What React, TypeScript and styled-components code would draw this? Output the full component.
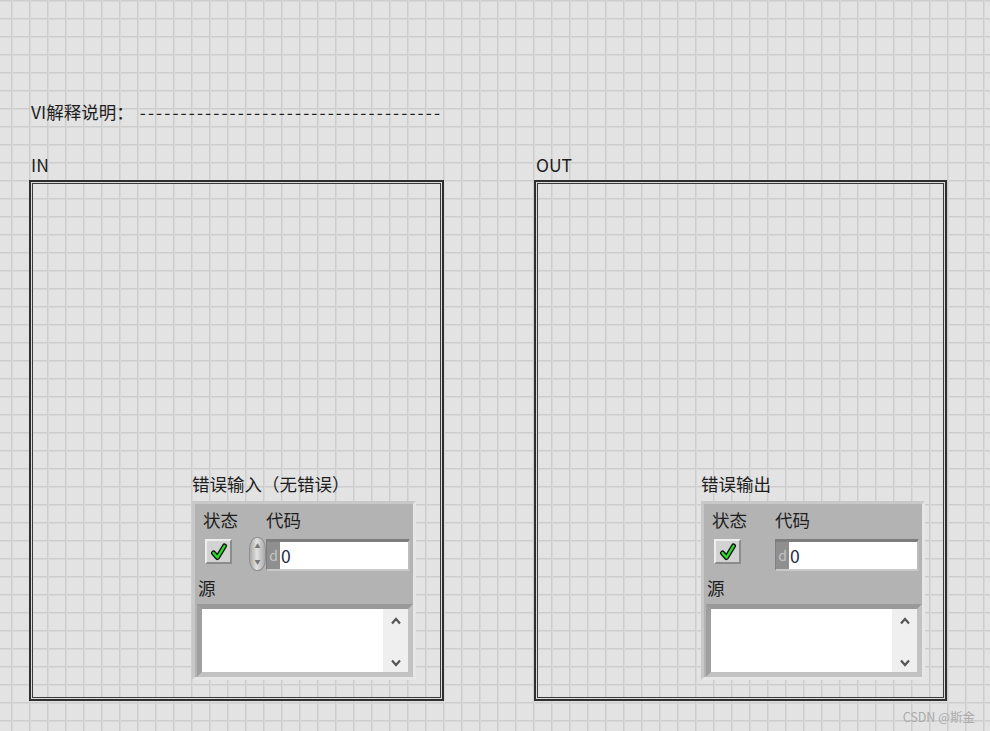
import React, { FC } from 'react';
import styled, { createGlobalStyle } from 'styled-components';

const GlobalStyle = createGlobalStyle`
  html, body {
    margin: 0;
    padding: 0;
  }
  body {
    background: #e3e3e3;
    font-family: "Noto Sans CJK SC", "Noto Sans", sans-serif;
  }
`;

type ClusterProps = { label: string; inset: number; withSpinner?: boolean };

const clusters: ClusterProps[] = [
  { label: '错误输入（无错误）', inset: 161, withSpinner: true },
  { label: '错误输出', inset: 165 },
];

const CheckMark: FC = () => (
  <svg width="18" height="18" viewBox="0 0 18 18">
    <path d="M3.5 10 L7.5 14.5 L14.5 3" fill="none" stroke="#111" strokeWidth="5" strokeLinecap="round" strokeLinejoin="round" />
    <path d="M3.5 10 L7.5 14.5 L14.5 3" fill="none" stroke="#27e027" strokeWidth="2.4" strokeLinecap="round" strokeLinejoin="round" />
  </svg>
);

const Chevron: FC<{ up?: boolean }> = ({ up }) => (
  <svg width="12" height="8" viewBox="0 0 12 8">
    <path d={up ? 'M2 6.5 L6 2 L10 6.5' : 'M2 1.5 L6 6 L10 1.5'} fill="none" stroke="#555" strokeWidth="2.2" />
  </svg>
);

const ErrorCluster: FC<ClusterProps> = ({ label, withSpinner }) => (
  <Cluster>
    <ClusterLabel>{label}</ClusterLabel>
    <Panel>
      <LabelRow>
        <StateLabel>状态</StateLabel>
        <span>代码</span>
      </LabelRow>
      <ControlRow>
        <CheckButton>
          <CheckMark />
        </CheckButton>
        <div>
          {withSpinner && (
            <Spinner>
              <SpinArrow>▲</SpinArrow>
              <SpinArrow>▼</SpinArrow>
            </Spinner>
          )}
        </div>
        <NumFrame>
          <Radix>d</Radix>
          <NumField>0</NumField>
        </NumFrame>
      </ControlRow>
      <SourceLabel>源</SourceLabel>
      <StringBox>
        <StringField />
        <ScrollBar>
          <Chevron up />
          <Chevron />
        </ScrollBar>
      </StringBox>
    </Panel>
  </Cluster>
);

export default function App() {
  return (
    <Page>
      <GlobalStyle />
      <Title>
        VI解释说明：<Dashes>-------------------------------------</Dashes>
      </Title>
      <Columns>
        {['IN', 'OUT'].map((name, index) => (
          <Column key={name} $width={index === 0 ? 415 : 413}>
            <Caption>{name}</Caption>
            <FrontBox $inset={clusters[index].inset}>
              <ErrorCluster {...clusters[index]} />
            </FrontBox>
          </Column>
        ))}
      </Columns>
      <Watermark>CSDN @斯金</Watermark>
    </Page>
  );
}

const Page = styled.div`
  position: relative;
  width: 990px;
  height: 731px;
  box-sizing: border-box;
  padding: 101px 0 0 29px;
  overflow: hidden;
  color: #1e1e1e;
  font-size: 17.5px;
  background-color: #e3e3e3;
  background-image: linear-gradient(to right, #cdcdcd 0 1px, #d8d8d8 1px 2px, transparent 2px),
    linear-gradient(to bottom, #cdcdcd 0 1px, #d8d8d8 1px 2px, transparent 2px);
  background-size: 18px 18px;
  background-position: 11px 0;
`;
const Title = styled.div`
  line-height: 22px;
  padding-left: 2px;
  white-space: nowrap;
`;
const Dashes = styled.span`
  letter-spacing: 2.1px;
  margin-left: 6px;
`;
const Columns = styled.div`
  display: flex;
  gap: 90px;
  margin-top: 31px;
`;
const Column = styled.div<{ $width: number }>`
  width: ${(p) => p.$width}px;
  display: flex;
  flex-direction: column;
`;
const Caption = styled.div`
  line-height: 22px;
  padding-left: 2px;
  margin-bottom: 4px;
`;
const FrontBox = styled.div<{ $inset: number }>`
  height: 521px;
  box-sizing: border-box;
  border: 2px solid #2e2e2e;
  box-shadow: inset 0 0 0 1px #dcdcdc, inset 0 0 0 2px #3a3a3a;
  display: flex;
  flex-direction: column;
  justify-content: flex-end;
  align-items: flex-start;
  padding: 0 0 19px ${(p) => p.$inset}px;
`;
const Cluster = styled.div`
  display: flex;
  flex-direction: column;
`;
const ClusterLabel = styled.div`
  line-height: 22px;
  margin-bottom: 6px;
  white-space: nowrap;
`;
const Panel = styled.div`
  width: 224px;
  height: 179px;
  box-sizing: border-box;
  border: 3px solid;
  border-color: #c8c8c8 #e6e6e6 #e6e6e6 #c8c8c8;
  background: #b3b3b3;
  display: flex;
  flex-direction: column;
`;
const LabelRow = styled.div`
  display: flex;
  height: 24px;
  line-height: 24px;
  margin-top: 4px;
`;
const StateLabel = styled.span`
  width: 71px;
  padding-left: 8px;
  box-sizing: border-box;
`;
const ControlRow = styled.div`
  display: grid;
  grid-template-columns: 54px 17px 144px;
  height: 34px;
  margin-top: 5px;
`;
const CheckButton = styled.div`
  width: 27px;
  height: 25px;
  margin: 2px 0 0 10px;
  box-sizing: border-box;
  border: 2px solid;
  border-color: #eeeeee #8c8c8c #8c8c8c #eeeeee;
  background: #d2d2d2;
  display: flex;
  align-items: center;
  justify-content: center;
`;
const Spinner = styled.div`
  width: 17px;
  height: 34px;
  box-sizing: border-box;
  border: 1px solid #8e8e8e;
  border-radius: 8px / 12px;
  background: linear-gradient(to right, #a9a9a9, #e2e2e2 45%, #a9a9a9);
  display: flex;
  flex-direction: column;
  align-items: center;
  justify-content: space-between;
  padding: 4px 0;
`;
const SpinArrow = styled.span`
  font-size: 6px;
  line-height: 8px;
  color: #777;
`;
const NumFrame = styled.div`
  height: 32px;
  margin-top: 2px;
  box-sizing: border-box;
  border-top: 3px solid #7e7e7e;
  border-left: 1px solid #7e7e7e;
  border-bottom: 2px solid #c9c9c9;
  border-right: 2px solid #bdbdbd;
  background: #8f8f8f;
  display: flex;
`;
const Radix = styled.span`
  width: 13px;
  text-align: center;
  color: #c4c4c4;
  font-size: 14px;
  line-height: 27px;
`;
const NumField = styled.div`
  flex: 1;
  background: #fff;
  color: #1d2a44;
  padding-left: 1px;
  line-height: 27px;
`;
const SourceLabel = styled.div`
  height: 33px;
  line-height: 33px;
  padding-left: 3px;
`;
const StringBox = styled.div`
  width: 216px;
  height: 73px;
  margin-left: 2px;
  box-sizing: border-box;
  border: 5px solid;
  border-color: #999999 #c2c2c2 #c2c2c2 #9f9f9f;
  background: #fff;
  display: flex;
`;
const StringField = styled.div`
  flex: 1;
`;
const ScrollBar = styled.div`
  width: 25px;
  background: #efefef;
  display: flex;
  flex-direction: column;
  align-items: center;
  justify-content: space-between;
  padding: 8px 0 5px;
`;
const Watermark = styled.div`
  position: absolute;
  right: 15px;
  bottom: 5px;
  font-size: 12.5px;
  color: #ababab;
`;
